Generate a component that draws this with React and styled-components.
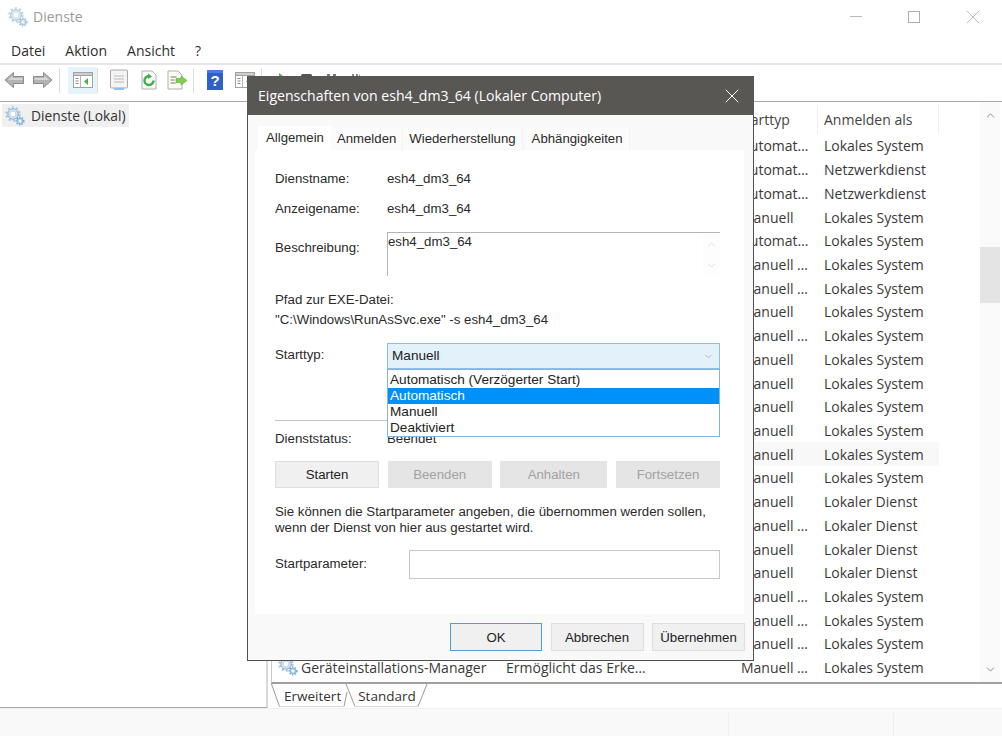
import React from 'react';
import styled, { createGlobalStyle } from 'styled-components';
import { ChevronUp, ChevronDown, X } from 'lucide-react';

const Global = createGlobalStyle`
  html, body { margin: 0; padding: 0; background: #fff; }
  * { box-sizing: border-box; }
`;

const sys = `"Open Sans", "Noto Sans", sans-serif`;
const dlg = `"Liberation Sans", Arial, sans-serif`;

const Win = styled.div`
  position: relative; width: 1002px; height: 736px; overflow: hidden; background: #fff;
  display: flex; flex-direction: column; font-family: ${sys}; font-size: 14px; color: #333;
`;
const TitleBar = styled.div`
  height: 36px; flex: none; display: flex; align-items: center; padding: 0 0 3px 8px; gap: 5px; color: #9a9a9a;
`;
const WinControls = styled.div`
  margin-left: auto; display: flex; align-items: center; gap: 46px; padding-right: 17px;
`;
const MinBar = styled.span`width: 12px; height: 1px; background: #b8b8b8;`;
const MaxBox = styled.span`width: 12px; height: 12px; border: 1px solid #adadad; margin-right: -5px;`;
const MenuBar = styled.div`
  height: 29px; flex: none; display: flex; align-items: center; gap: 20px; padding: 2px 0 0 11px;
  border-bottom: 2px solid #e6e6e6; color: #2e2e2e;
`;
const Toolbar = styled.div`
  height: 36px; flex: none; display: flex; align-items: center; padding: 0 0 6px 4px; background: #fff;
`;
const ToolIcon = styled.svg`
  flex: none; width: ${p => p.$w || 20}px; height: ${p => p.$h || 20}px; margin-left: ${p => p.$ml || 0}px;
`;
const ToolSep = styled.span`
  flex: none; width: 1px; height: 25px; background: #dcdcdc; margin-left: ${p => p.$ml || 0}px;
`;
const ToolActive = styled.span`
  flex: none; width: 29px; height: 27px; margin-left: 8px; background: #e5f3fb; display: flex; align-items: center; justify-content: center;
`;
const ToolRule = styled.div`height: 1px; flex: none; background: #a8a8b0;`;
const Split = styled.div`
  flex: none; height: 606px; display: flex; gap: 3px;
`;
const LeftPane = styled.div`
  width: 268px; flex: none; border-right: 2px solid #d8d8d8; border-bottom: 1px solid #a9a9a9; padding: 2px 0 0 2px;
`;
const TreeItem = styled.div`
  width: 127px; height: 23px; background: #f0f0f0; display: flex; align-items: center; gap: 6px; padding-left: 3px; color: #333; font-size: 13.8px;
`;
const RightPane = styled.div`
  flex: 1; min-width: 0; display: flex; flex-direction: column;
`;
const ListFrame = styled.div`
  height: 582px; flex: none; display: flex; border-left: 1px solid #c8c8c8; border-bottom: 2px solid #a0a0a0; overflow: hidden;
`;
const List = styled.div`flex: none; width: 707px; overflow: hidden;`;
const HeaderRow = styled.div`
  height: 32px; width: 667px; display: grid; grid-template-columns: 466px 80px 1fr; align-items: end; color: #444;
`;
const HeadCell = styled.span`
  grid-column: ${p => p.$col}; padding-left: ${p => p.$pl || 0}px; height: 29px; display: flex; align-items: center;
  border-right: ${p => p.$div ? '1px solid #f0f0f0' : 'none'};
`;
const Row = styled.div`
  height: 23.72px; width: 667px; display: grid; grid-template-columns: 6px 23px 205px 235px 83px 1fr; align-items: center; white-space: nowrap;
  color: #3a3a3a; background: ${p => p.$hover ? '#f8f8f8' : 'transparent'};
`;
const Cell = styled.span`grid-column: ${p => p.$col}; overflow: hidden;`;
const ScrollBar = styled.div`
  flex: none; width: 20px; margin-left: 1px; background: #fafafa; display: flex; flex-direction: column; align-items: center; color: #777; padding: 7px 0 6px;
`;
const Thumb = styled.div`width: 20px; height: 56px; background: #e4e4e4; margin-top: 125px;`;
const ScrollFill = styled.div`flex: 1;`;
const ViewTabs = styled.div`
  height: 23px; flex: none; position: relative; display: flex; padding-left: 13px; gap: 17px; align-items: center; color: #333; background: #fff; font-size: 13.5px;
`;
const TabShape = styled.svg`position: absolute; left: 0; top: 0; width: 170px; height: 23px;`;
const ViewTab = styled.span`position: relative;`;
const StatusBar = styled.div`
  flex: 1; display: flex; background: #f9f9f9; border-top: 1px solid #f0f0f0;
`;
const StatusCell = styled.div`
  flex: none; width: ${p => p.$w}px; margin-top: 4px; border-left: ${p => p.$first ? 'none' : '1px solid #efefef'};
`;

const Dialog = styled.div`
  position: absolute; left: 247px; top: 76px; width: 507px; height: 585px; background: #f9f9f9;
  border: 1px solid #505050; border-top: none; display: flex; flex-direction: column;
  font-family: ${dlg}; font-size: 13.25px; color: #2a2a2a;
`;
const DlgTitle = styled.div`
  height: 39px; flex: none; background: #595754; color: #fff; font-family: ${sys}; font-size: 14.1px;
  display: flex; align-items: center; justify-content: space-between; padding: 0 10px 0 11px; margin: 0 -1px;
`;
const TabBar = styled.div`
  height: 24px; margin: 11px 0 0 10px; flex: none; display: flex; align-items: flex-end; font-size: 13.2px;
`;
const Tab = styled.div`
  height: ${p => p.$active ? 24 : 22}px; padding: 0 ${p => p.$active ? 7 : 6}px ${p => p.$active ? 2 : 1}px ${p => p.$active ? 8 : 6}px; display: flex; align-items: center; background: ${p => p.$active ? '#fff' : '#fbfbfb'};
  border-right: ${p => p.$active ? 'none' : '1px solid #f3f3f3'}; white-space: nowrap; margin-right: ${p => p.$gap || 0}px;
`;
const Panel = styled.div`
  flex: none; height: 464px; margin: 0 9px 0 7px; background: #fff; padding: 20px 24px 0 20px; display: flex; flex-direction: column;
`;
const Field = styled.div`
  display: flex; align-items: ${p => p.$start ? 'flex-start' : 'center'}; margin-top: ${p => p.$mt || 0}px; line-height: 16px;
`;
const Value = styled.span`padding-top: 1px; margin-bottom: -1px;`;
const Label = styled.span`
  flex: none; width: ${p => p.$w || 112}px; margin-top: ${p => p.$mt || 0}px; padding-top: 1px; margin-bottom: -1px;
`;
const DescBox = styled.div`
  flex: 1; height: 44px; border-top: 1px solid #b4b4b4; border-left: 1px solid #b4b4b4; display: flex; justify-content: space-between; position: relative; line-height: 16px; padding-top: 1px;
`;
const DescScroll = styled.div`
  width: 17px; background: #fdfdfd; display: flex; flex-direction: column; justify-content: space-between; align-items: center; padding: 4px 0; color: #ccc;
`;
const PlainLine = styled.div`margin-top: ${p => p.$mt || 0}px; line-height: 16px; white-space: nowrap; padding-top: 1px; margin-bottom: -1px;`;
const ComboWrap = styled.div`flex: 1; position: relative;`;
const Combo = styled.div`
  height: 26px; background: #e3f1fb; border: 1px solid #8dbfe6; display: flex; align-items: center; justify-content: space-between; padding: 0 4px 0 4px; color: #222; font-size: 13.6px;
`;
const Dropdown = styled.div`
  position: absolute; left: 0; right: 0; top: 26px; height: 68px; background: #fff; border: 1px solid #84b4dc; padding-top: 1.5px; z-index: 2;
`;
const Option = styled.div`
  height: 16px; line-height: 16px; padding-left: 2px; font-size: 13.6px; background: ${p => p.$sel ? '#0091f8' : 'transparent'}; color: ${p => p.$sel ? '#fff' : '#222'};
`;
const Divider = styled.div`height: 1px; background: #c4c4c4; margin-top: 51px;`;
const ButtonRow = styled.div`display: flex; justify-content: space-between; margin-top: 15px;`;
const Btn = styled.div`
  flex: none; width: ${p => p.$w || 104}px; height: ${p => p.$h || 27}px; display: flex; align-items: center; justify-content: center;
  background: ${p => p.$dis ? '#e5e5e5' : '#f0f0f0'}; color: ${p => p.$dis ? '#a2a2a2' : '#222'};
  border: 1px solid ${p => p.$focus ? '#4a9fd8' : (p.$dis ? '#e5e5e5' : '#dedede')};
`;
const TextInput = styled.div`flex: 1; height: 29px; background: #fff; border: 1px solid #c8c8c8;`;
const Footer = styled.div`
  flex: 1; display: flex; justify-content: flex-end; gap: 8.5px; padding: 9px 8px 0 0;
`;

const Gear = ({ size = 20, faded }) => (
  <svg width={size} height={size} viewBox="0 0 20 20" style={{ flex: 'none', opacity: faded ? 0.75 : 1 }}>
    <circle cx="8" cy="8" r="6.2" fill="none" stroke="#a9c9e3" strokeWidth="3" strokeDasharray="2 1.9" />
    <circle cx="8" cy="8" r="5.2" fill="#dbe8f3" stroke="#8fb2cf" strokeWidth="1" />
    <circle cx="8" cy="8" r="3" fill="#fff" stroke="#b3c8da" strokeWidth="0.8" />
    <circle cx="15" cy="15" r="3.6" fill="none" stroke="#7fb0d8" strokeWidth="2" strokeDasharray="1.4 1.2" />
    <circle cx="15" cy="15" r="2.8" fill="#c6dcee" stroke="#6f9fc8" strokeWidth="0.7" />
    <circle cx="15" cy="15" r="1.1" fill="#fff" />
  </svg>
);

const Arrow = ({ flip }) => (
  <ToolIcon $w={20} $h={20} $ml={flip ? 9 : 0} viewBox="0 0 20 20">
    <g transform={flip ? 'translate(20,0) scale(-1,1)' : undefined}>
      <path d="M1 10 L9.5 2.5 V6.5 H19.5 V13.5 H9.5 V17.5 Z" fill="#b4b4b4" stroke="#8a8a8a" strokeWidth="1" strokeLinejoin="round" />
      <path d="M4 10 L8.5 6 V8 H18.5 V10 H4Z" fill="#d6d6d6" />
    </g>
  </ToolIcon>
);

const PaneIcon = ({ ml, h = 18, w = 20 }) => (
  <ToolIcon $w={w} $h={h} $ml={ml} viewBox="0 0 20 18">
    <rect x="0.5" y="1.5" width="19" height="15" fill="#fff" stroke="#a2a2a2" />
    <rect x="0.5" y="1.5" width="19" height="3" fill="#cfcfcf" stroke="#a2a2a2" />
    <path d="M7.5 5 V16" stroke="#b5b5b5" />
    <path d="M2.5 7.5h3M2.5 10h3M2.5 12.5h3" stroke="#8a8a8a" />
    <path d="M15 7 L11 10.5 L15 14Z" fill="#48b04c" />
  </ToolIcon>
);

const rows = [
  ['Automat…', 'Lokales System'], ['Automat…', 'Netzwerkdienst'], ['Automat…', 'Netzwerkdienst'],
  ['Manuell', 'Lokales System'], ['Automat…', 'Lokales System'], ['Manuell …', 'Lokales System'],
  ['Manuell …', 'Lokales System'], ['Manuell', 'Lokales System'], ['Manuell …', 'Lokales System'],
  ['Manuell', 'Lokales System'], ['Manuell', 'Lokales System'], ['Manuell', 'Lokales System'],
  ['Manuell', 'Lokales System'], ['Manuell', 'Lokales System', true], ['Manuell', 'Lokales System'],
  ['Manuell', 'Lokaler Dienst'], ['Manuell …', 'Lokaler Dienst'], ['Manuell', 'Lokaler Dienst'],
  ['Manuell', 'Lokaler Dienst'], ['Manuell …', 'Lokales System'], ['Manuell …', 'Lokales System'],
  ['Manuell …', 'Lokales System'],
];

export default function App() {
  return (
    <Win>
      <Global />
      <TitleBar>
        <Gear faded />
        <span>Dienste</span>
        <WinControls>
          <MinBar /><MaxBox />
          <X size={24} strokeWidth={0.7} color="#a0a0a0" />
        </WinControls>
      </TitleBar>
      <MenuBar>
        <span>Datei</span><span>Aktion</span><span>Ansicht</span><span>?</span>
      </MenuBar>
      <Toolbar>
        <Arrow /><Arrow flip />
        <ToolSep $ml={6} />
        <ToolActive><PaneIcon /></ToolActive>
        <ToolSep />
        <ToolIcon $w={20} $h={22} $ml={11} viewBox="0 0 20 22">
          <rect x="1.5" y="1" width="17" height="18" rx="1" fill="#f4f4f4" stroke="#a8a8a8" />
          <path d="M5 7h10M5 10h10M5 13h10" stroke="#b9b9b9" />
          <rect x="5" y="19" width="10" height="2" fill="#8cc4e8" />
        </ToolIcon>
        <ToolIcon $w={16} $h={20} $ml={12} viewBox="0 0 16 20">
          <path d="M1 1H11L15 5V19H1Z" fill="#fbfbfb" stroke="#b0b0b0" />
          <path d="M8 6a4.5 4.5 0 1 0 4.5 4.5" fill="none" stroke="#3fae49" strokeWidth="2.4" />
          <path d="M7 3.5 L11 6.5 L7 9Z" fill="#3fae49" />
        </ToolIcon>
        <ToolIcon $w={21} $h={20} $ml={10} viewBox="0 0 21 20">
          <path d="M1 1H11L15 5V19H1Z" fill="#fbfbf2" stroke="#b0b0a8" />
          <path d="M3.5 7h6M3.5 10h4M3.5 13h5" stroke="#777" />
          <path d="M9 8.5h5V6l6 4.5-6 4.5v-2.5H9Z" fill="#7ed04e" stroke="#55a830" strokeWidth="0.6" />
        </ToolIcon>
        <ToolSep $ml={5} />
        <ToolIcon $w={16} $h={20} $ml={13} viewBox="0 0 16 20">
          <rect width="16" height="20" fill="#2f5fc8" />
          <rect width="16" height="3" fill="#4a7be0" />
          <text x="8" y="15.5" fontSize="15" fontWeight="700" textAnchor="middle" fill="#fff" fontFamily="Liberation Sans">?</text>
        </ToolIcon>
        <PaneIcon ml={12} />
        <ToolSep $ml={6} />
        <ToolIcon $w={12} $h={16} $ml={15} viewBox="0 0 12 16"><path d="M2 1L11 8L2 15Z" fill="#48b04c" /></ToolIcon>
        <ToolIcon $w={12} $h={16} $ml={11} viewBox="0 0 12 16"><rect x="1" y="2" width="11" height="12" rx="1.5" fill="#555" /></ToolIcon>
        <ToolIcon $w={12} $h={16} $ml={13} viewBox="0 0 12 16"><path d="M2 2h3v12H2zM8 2h3v12H8z" fill="#777" /></ToolIcon>
        <ToolIcon $w={12} $h={16} $ml={14} viewBox="0 0 12 16"><path d="M1 2h2v12H1zM5 2h2v12H5zM8 2l4 6-4 6z" fill="#888" /></ToolIcon>
      </Toolbar>
      <ToolRule />
      <Split>
        <LeftPane>
          <TreeItem><Gear /><span>Dienste (Lokal)</span></TreeItem>
        </LeftPane>
        <RightPane>
          <ListFrame>
            <List>
              <HeaderRow>
                <HeadCell $col={2} $div>Starttyp</HeadCell>
                <HeadCell $col={3} $pl={6} $div>Anmelden als</HeadCell>
              </HeaderRow>
              {rows.map((r, i) => (
                <Row key={i} $hover={r[2]}>
                  <Cell $col={4} />
                  <Cell $col={5}>{r[0]}</Cell>
                  <Cell $col={6}>{r[1]}</Cell>
                </Row>
              ))}
              <Row>
                <Cell $col={2}><Gear /></Cell>
                <Cell $col={3}>Geräteinstallations-Manager</Cell>
                <Cell $col={4}>Ermöglicht das Erke…</Cell>
                <Cell $col={5}>Manuell …</Cell>
                <Cell $col={6}>Lokales System</Cell>
              </Row>
            </List>
            <ScrollBar>
              <ChevronUp size={13} strokeWidth={1.5} />
              <Thumb />
              <ScrollFill />
              <ChevronDown size={13} strokeWidth={1.5} />
            </ScrollBar>
          </ListFrame>
          <ViewTabs>
            <TabShape viewBox="0 0 170 23">
              <path d="M0.5 0 L8.5 22.5 H73 L76 8" fill="none" stroke="#9a9a9a" />
              <path d="M75 0 L84 22.5 H147 L156 0" fill="none" stroke="#9a9a9a" />
              <path d="M8.5 22.5 H73 M84 22.5 H147" stroke="#d5d5d5" />
            </TabShape>
            <ViewTab>Erweitert</ViewTab>
            <ViewTab>Standard</ViewTab>
          </ViewTabs>
        </RightPane>
      </Split>
      <StatusBar>
        <StatusCell $first $w={728} />
        <StatusCell $w={165} />
        <StatusCell $w={107} />
      </StatusBar>

      <Dialog>
        <DlgTitle>
          <span>Eigenschaften von esh4_dm3_64 (Lokaler Computer)</span>
          <X size={24} strokeWidth={1} color="#fff" />
        </DlgTitle>
        <TabBar>
          <Tab $active>Allgemein</Tab>
          <Tab>Anmelden</Tab>
          <Tab $gap={3}>Wiederherstellung</Tab>
          <Tab>Abhängigkeiten</Tab>
        </TabBar>
        <Panel>
          <Field><Label>Dienstname:</Label><Value>esh4_dm3_64</Value></Field>
          <Field $mt={14}><Label>Anzeigename:</Label><Value>esh4_dm3_64</Value></Field>
          <Field $start $mt={16}>
            <Label $mt={7}>Beschreibung:</Label>
            <DescBox>
              <span>esh4_dm3_64</span>
              <DescScroll><ChevronUp size={13} strokeWidth={1.2} /><ChevronDown size={13} strokeWidth={1.2} /></DescScroll>
            </DescBox>
          </Field>
          <PlainLine $mt={15}>Pfad zur EXE-Datei:</PlainLine>
          <PlainLine $mt={4}>"C:\Windows\RunAsSvc.exe" -s esh4_dm3_64</PlainLine>
          <Field $start $mt={16}>
            <Label $mt={3}>Starttyp:</Label>
            <ComboWrap>
              <Combo><span>Manuell</span><ChevronDown size={11} strokeWidth={1.2} color="#7a8a98" style={{ marginRight: 1 }} /></Combo>
              <Dropdown>
                <Option>Automatisch (Verzögerter Start)</Option>
                <Option $sel>Automatisch</Option>
                <Option>Manuell</Option>
                <Option>Deaktiviert</Option>
              </Dropdown>
            </ComboWrap>
          </Field>
          <Divider />
          <Field $mt={9}><Label>Dienststatus:</Label><Value>Beendet</Value></Field>
          <ButtonRow>
            <Btn>Starten</Btn>
            <Btn $dis>Beenden</Btn>
            <Btn $dis $w={107}>Anhalten</Btn>
            <Btn $dis>Fortsetzen</Btn>
          </ButtonRow>
          <PlainLine $mt={15}>Sie können die Startparameter angeben, die übernommen werden sollen,</PlainLine>
          <PlainLine>wenn der Dienst von hier aus gestartet wird.</PlainLine>
          <Field $mt={15}><Label $w={134} $mt={-4}>Startparameter:</Label><TextInput /></Field>
        </Panel>
        <Footer>
          <Btn $focus $w={92} $h={28}>OK</Btn>
          <Btn $w={93} $h={28}>Abbrechen</Btn>
          <Btn $w={93} $h={28}>Übernehmen</Btn>
        </Footer>
      </Dialog>
    </Win>
  );
}
